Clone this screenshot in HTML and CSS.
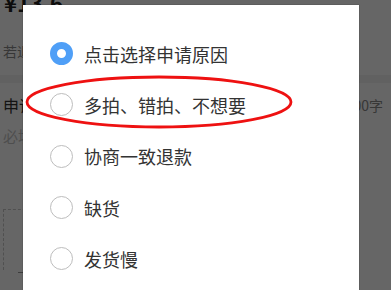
FILE: index.html
```html
<!DOCTYPE html>
<html lang="zh-CN">
<head>
<meta charset="utf-8">
<link rel="stylesheet" href="styles.css">
</head>
<body>
<div class="page">
  <div class="price">¥13.6</div>
  <div class="tip">若退款成功，将退回至原支付账户</div>
  <div class="sep"></div>
  <div class="reason-row">
    <span class="reason-label">申请说明</span>
    <span class="count">0/200字</span>
  </div>
  <div class="must">必填，请您详细填写申请说明</div>
  <div class="upload"><span class="dash"></span></div>
</div>
<div class="overlay"></div>
<div class="dialog">
  <ul class="options">
    <li class="option"><span class="radio checked"></span><span class="label">点击选择申请原因</span></li>
    <li class="option"><span class="radio"></span><span class="label">多拍、错拍、不想要</span></li>
    <li class="option"><span class="radio"></span><span class="label">协商一致退款</span></li>
    <li class="option"><span class="radio"></span><span class="label">缺货</span></li>
    <li class="option"><span class="radio"></span><span class="label">发货慢</span></li>
  </ul>
  <svg class="mark" width="270" height="56" viewBox="0 0 270 56">
    <ellipse cx="136" cy="27" rx="132" ry="25" fill="none" stroke="#ee1111" stroke-width="2.8"/>
  </svg>
</div>
</body>
</html>
```
FILE: styles.css
```css
html, body {
  margin: 0;
  padding: 0;
  width: 391px;
  height: 290px;
  overflow: hidden;
  font-family: "Noto Sans CJK SC", "Noto Sans", sans-serif;
}
.page {
  width: 391px;
  height: 290px;
  background: #fff;
  overflow: hidden;
}
.price {
  margin-top: -13px;
  padding-left: 4px;
  font-size: 22px;
  font-weight: bold;
  color: #222;
  line-height: 30px;
  height: 30px;
}
.tip {
  margin-top: 24px;
  padding-left: 3px;
  font-size: 14px;
  color: #8a8a8a;
  line-height: 20px;
}
.sep {
  margin-top: 14px;
  height: 8px;
  background: #f2f2f2;
}
.reason-row {
  display: flex;
  justify-content: space-between;
  align-items: center;
  padding: 0 8px 0 3px;
  margin-top: 10px;
  height: 24px;
}
.reason-label {
  font-size: 16px;
  color: #333;
}
.count {
  font-size: 14px;
  color: #8a8a8a;
}
.must {
  margin-top: 8px;
  padding-left: 3px;
  font-size: 15px;
  color: #c4c4c4;
  line-height: 22px;
}
.upload {
  margin: 62px 0 0 3px;
  width: 120px;
  height: 60px;
  border: 1px dashed #c8c8c8;
  border-bottom: none;
}
.dash {
  display: block;
  margin: 62px 0 0 14px;
  width: 8px;
  height: 1px;
  background: #999;
}
.overlay {
  position: absolute;
  inset: 0;
  background: rgba(0, 0, 0, 0.6);
}
.dialog {
  position: absolute;
  left: 23px;
  top: 5px;
  width: 336px;
  height: 285px;
  background: #fff;
  box-shadow: 0 0 1px rgba(0,0,0,0.5);
}
.options {
  list-style: none;
  margin: 0;
  padding: 23px 0 0 27px;
}
.option {
  display: flex;
  align-items: center;
  height: 51.3px;
}
.radio {
  box-sizing: border-box;
  width: 23px;
  height: 23px;
  border-radius: 50%;
  border: 1.5px solid #bdbdbd;
  flex: none;
}
.radio.checked {
  border: 7px solid #4f9ff7;
}
.label {
  margin-left: 11px;
  font-size: 18px;
  color: #333;
  line-height: 24px;
}
.mark {
  position: absolute;
  left: 0;
  top: 70px;
}
```
